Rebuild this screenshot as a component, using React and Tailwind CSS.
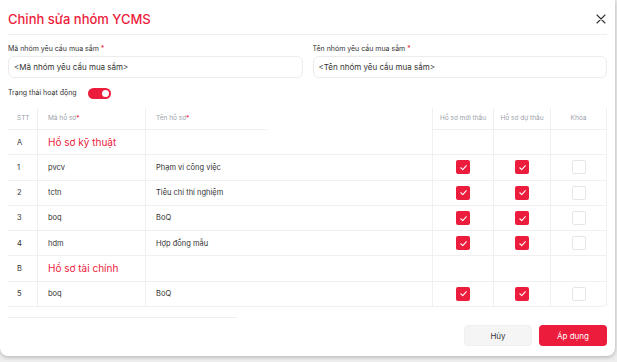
import React, { useState } from 'react';

const RED = 'bg-[#ec1c3c]';

const rows = [
  { stt: 'A', group: 'Hồ sơ kỹ thuật' },
  { stt: '1', code: 'pvcv', name: 'Phạm vi công việc', moi: true, du: true, lock: false },
  { stt: '2', code: 'tctn', name: 'Tiêu chí thí nghiệm', moi: true, du: true, lock: false },
  { stt: '3', code: 'boq', name: 'BoQ', moi: true, du: true, lock: false },
  { stt: '4', code: 'hdm', name: 'Hợp đồng mẫu', moi: true, du: true, lock: false },
  { stt: 'B', group: 'Hồ sơ tài chính' },
  { stt: '5', code: 'boq', name: 'BoQ', moi: true, du: true, lock: false },
];

const Check = ({ checked }) =>
  checked ? (
    <div className={`w-[14px] h-[14px] rounded-[2px] ${RED} flex items-center justify-center`}>
      <svg width="9" height="9" viewBox="0 0 10 10" fill="none">
        <path d="M2 5.3 L4.2 7.3 L8.2 3" stroke="white" strokeWidth="1.2" strokeLinecap="round" strokeLinejoin="round" />
      </svg>
    </div>
  ) : (
    <div className="w-[14px] h-[14px] rounded-[2px] border border-[#e6e6e6] bg-white" />
  );

const Req = () => <span className="text-[#ec1c3c]">*</span>;

export default function App() {
  const [active, setActive] = useState(true);
  const cols = 'grid grid-cols-[30px_108px_287px_61px_57px_56px]';
  const cell = 'border-r border-[#f0f0f0] flex items-center';

  return (
    <div className="w-[617px] h-[362px] bg-[#eeeeee] overflow-hidden" style={{ fontFamily: 'Inter, "Noto Sans", sans-serif' }}>
      <div className="w-[615px] h-[356px] bg-white rounded-b-lg shadow-[0_1px_4px_rgba(0,0,0,0.28)] flex flex-col px-2">
        {/* header */}
        <div className="h-[35px] flex items-center justify-between pt-[4px] border-b border-[#eeeeee]">
          <h1 className="text-[13px] font-medium text-[#ec1c3c] leading-none">Chỉnh sửa nhóm YCMS</h1>
          <svg width="10" height="10" viewBox="0 0 10 10" className="mr-[1px]">
            <path d="M1 1 L9 9 M9 1 L1 9" stroke="#333" strokeWidth="1.1" strokeLinecap="round" />
          </svg>
        </div>

        {/* form */}
        <div className="grid grid-cols-2 gap-[10px] mt-[9px]">
          <div>
            <label className="block text-[7px] leading-[9px] text-[#333]">
              Mã nhóm yêu cầu mua sắm <Req />
            </label>
            <div className="mt-[3px] h-[22px] rounded-md border border-[#ececec] px-[5px] flex items-center text-[8px] text-[#333]">
              &lt;Mã nhóm yêu cầu mua sắm&gt;
            </div>
          </div>
          <div>
            <label className="block text-[7px] leading-[9px] text-[#333]">
              Tên nhóm yêu cầu mua sắm <Req />
            </label>
            <div className="mt-[3px] h-[22px] rounded-md border border-[#ececec] px-[5px] flex items-center text-[8px] text-[#333]">
              &lt;Tên nhóm yêu cầu mua sắm&gt;
            </div>
          </div>
        </div>

        <div className="flex items-center mt-[10px] h-[11px]">
          <span className="w-[80px] text-[7px] text-[#333]">Trạng thái hoạt động</span>
          <button
            onClick={() => setActive(!active)}
            className={`w-[23px] h-[11px] rounded-full ${active ? RED : 'bg-gray-300'} flex items-center px-[2px] ${active ? 'justify-end' : 'justify-start'}`}
          >
            <span className="w-[7px] h-[7px] rounded-full bg-white" />
          </button>
        </div>

        {/* table */}
        <div className="mt-[9px] w-[599px]">
          <div className={`${cols} h-[22px] text-[6.5px] text-[#9aa0a8]`}>
            <div className={`${cell} border-b pl-[9px]`}>STT</div>
            <div className={`${cell} border-b pl-[10px]`}>
              Mã hồ sơ<Req />
            </div>
            <div className="border-r border-[#f0f0f0] flex flex-col">
              <div className="flex-1 flex items-center pl-[10px]">
                Tên hồ sơ<Req />
              </div>
              <div className="h-px w-[121px] bg-[#f0f0f0]" />
            </div>
            <div className={`${cell} border-b justify-center`}>Hồ sơ mời thầu</div>
            <div className={`${cell} border-b justify-center`}>Hồ sơ dự thầu</div>
            <div className={`${cell} border-b justify-center`}>Khóa</div>
          </div>
          {rows.map((r, i) => (
            <div key={i} className={`${cols} h-[25.3px] border-b border-[#f0f0f0] text-[7.5px] text-[#333] ${i === rows.length - 1 ? 'rounded-br-md' : ''}`}>
              <div className={`${cell} pl-[9px]`}>{r.stt}</div>
              {r.group ? (
                <div className={`${cell} pl-[10px] text-[10px] text-[#ec1c3c]`}>{r.group}</div>
              ) : (
                <div className={`${cell} pl-[10px]`}>{r.code}</div>
              )}
              <div className={`${cell} pl-[10px]`}>{r.name}</div>
              <div className={`${cell} justify-center`}>{!r.group && <Check checked={r.moi} />}</div>
              <div className={`${cell} justify-center`}>{!r.group && <Check checked={r.du} />}</div>
              <div className={`${cell} justify-center`}>{!r.group && <Check checked={r.lock} />}</div>
            </div>
          ))}
        </div>

        <div className="mt-[10px] h-px w-[229px] bg-[#efefef]" />

        {/* footer */}
        <div className="mt-[7px] flex justify-end gap-[7px] w-[599px]">
          <button className="w-[68px] h-[21px] rounded bg-[#f5f5f5] border border-[#f0f0f0] text-[8px] text-[#333]">Hủy</button>
          <button className={`w-[68px] h-[21px] rounded ${RED} text-[8px] text-white`}>Áp dụng</button>
        </div>
      </div>
    </div>
  );
}
